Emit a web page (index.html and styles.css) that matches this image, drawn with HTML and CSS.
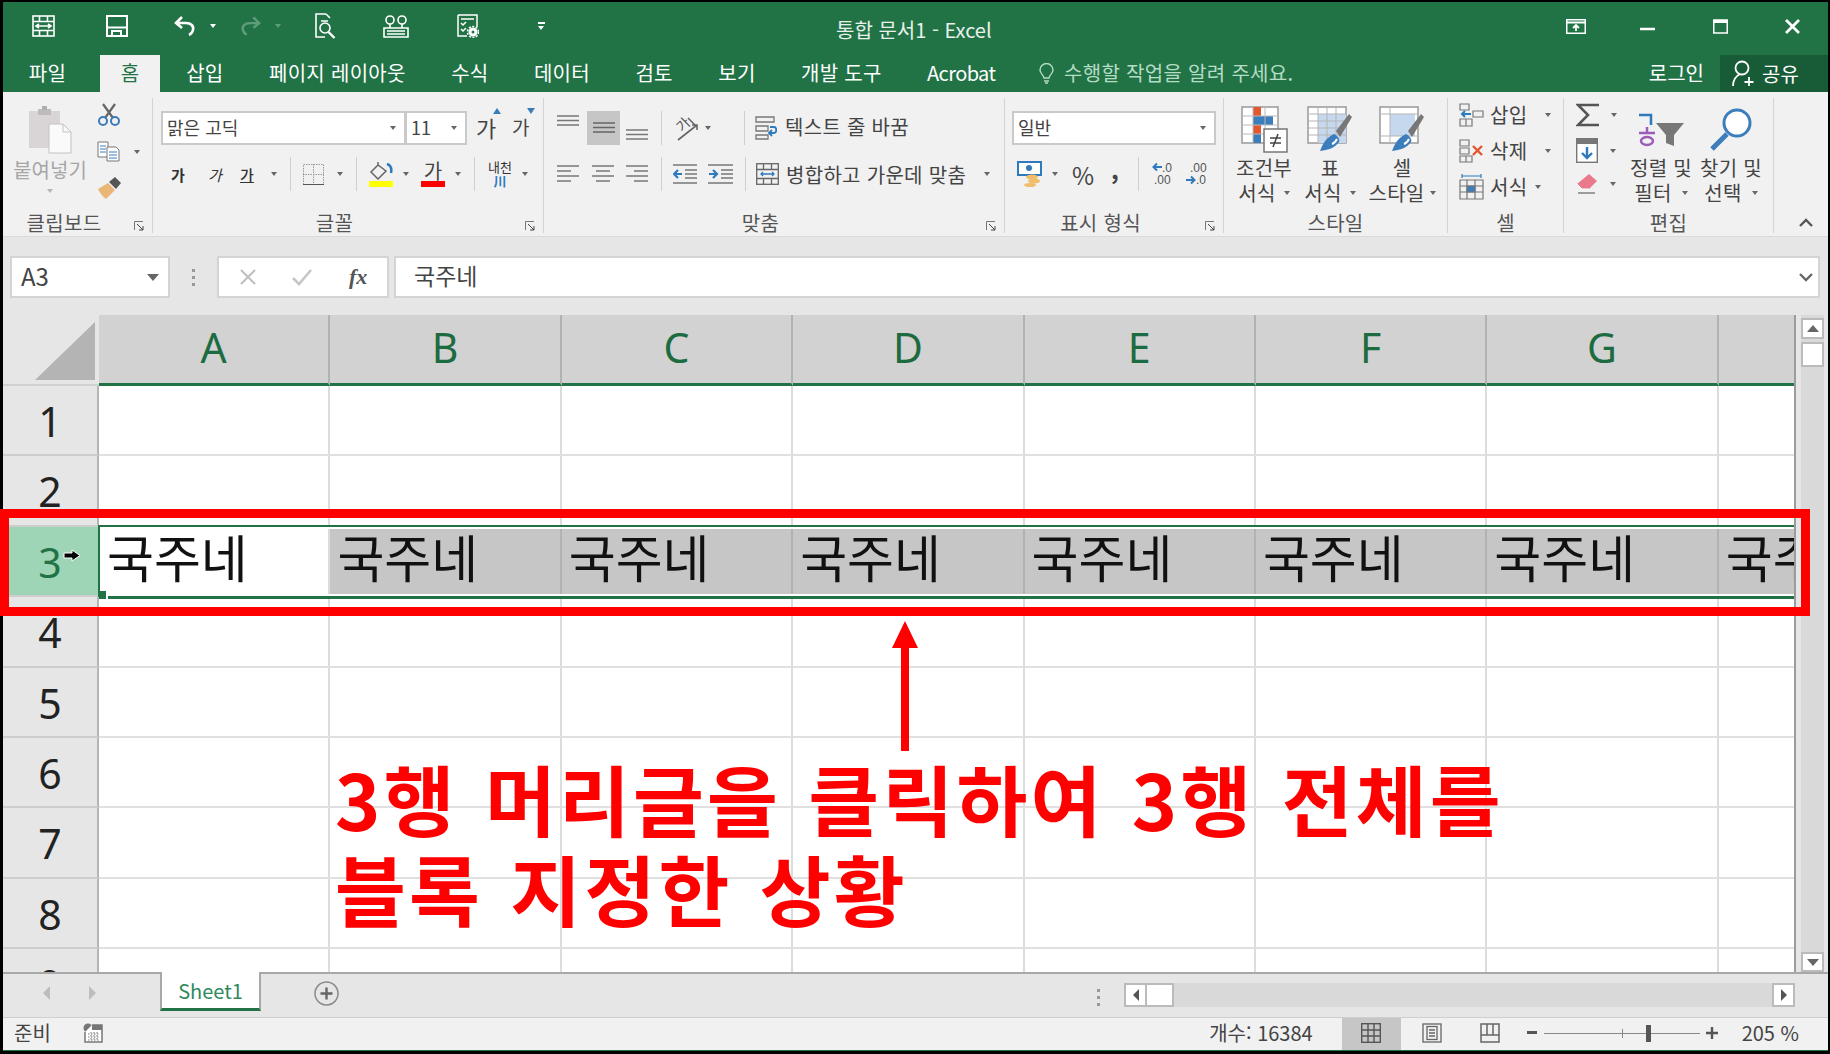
FILE: index.html
```html
<!DOCTYPE html>
<html lang="ko">
<head>
  <meta charset="UTF-8">
  <title>통합 문서1 - Excel</title>
  <link rel="stylesheet" href="styles.css">
</head>
<body>
  <header class="titlebar">
    <svg class="ml-29" width="23" height="22" viewBox="0 0 23 22" fill="none" stroke="#fff" stroke-width="1.6"><rect x="1" y="1" width="21" height="20"/><path d="M1 6.5h21M1 15.5h21M7.5 1v5.500M15.500 1v5.500M7.500 15.500V21M15.500 15.500V21M4 11h15M7 9l-3 2 3 2M16 9l3 2-3 2"/></svg>
    <svg class="ml-51" width="22" height="22" viewBox="0 0 22 22" fill="none" stroke="#fff" stroke-width="2"><path d="M1 1h20v20H1zM1 12.500h20M6 21v-5h9v5"/></svg>
    <svg class="ml-45" width="23" height="22" viewBox="0 0 23 22" fill="none" stroke="#fff" stroke-width="2.600"><path d="M9 2 3 8l6 5M3 8h10c5 0 8 3 7 7-.5 2-2 4-4 5"/></svg>
    <i class="caret caret-w ml-14"></i>
    <svg class="ml-24" width="22" height="22" viewBox="0 0 23 22" fill="none" stroke="#5f9c7c" stroke-width="2.600"><path d="M14 2l6 6-6 5M20 8H10c-5 0-8 3-7 7 .5 2 2 4 4 5"/></svg>
    <i class="caret caret-dim ml-13"></i>
    <svg class="ml-33" width="23" height="26" viewBox="0 0 23 26" fill="none" stroke="#fff" stroke-width="1.600"><path d="M12 1H2v23h9M12 1l4 4M7 8h7"/><circle cx="11" cy="15" r="5"/><path d="M14.500 19l6 6" stroke-width="2.400"/></svg>
    <svg class="ml-46" width="26" height="24" viewBox="0 0 26 24" fill="none" stroke="#fff" stroke-width="1.600"><circle cx="7" cy="6" r="4"/><circle cx="19" cy="6" r="4"/><path d="M7 10v4M19 10v4M1 14h24v9H1zM4 17h18M4 20h18"/></svg>
    <svg class="ml-48" width="22" height="24" viewBox="0 0 22 24" fill="none" stroke="#fff" stroke-width="1.500"><path d="M1 1h19v12M1 1v21h9M4 5h13M4 9l2 2 3-3M4 15l2 2 3-3"/><circle cx="16" cy="18" r="3" stroke-width="3"/><circle cx="16" cy="18" r="5.500" stroke-width="1.500" stroke-dasharray="2 1.500"/></svg>
    <span class="qat-more ml-59"><i class="qat-bar"></i><i class="caret caret-w"></i></span>
    <span class="doc-title">통합 문서1 - Excel</span>
    <span class="win-btns">
      <svg width="20" height="15" viewBox="0 0 20 15" fill="none" stroke="#fff" stroke-width="1.500"><rect x=".75" y=".75" width="18.500" height="13.500"/><path d="M1 3.500h18" stroke-width="2"/><path d="M10 12V6.500M7 9l3-3 3 3" stroke-width="1.800"/></svg>
      <svg class="ml-54" width="15" height="15" viewBox="0 0 15 15"><path d="M0 10h15" stroke="#fff" stroke-width="2.500"/></svg>
      <svg class="ml-58" width="15" height="15" viewBox="0 0 15 15" fill="none" stroke="#fff"><rect x=".75" y="1" width="13.500" height="13" stroke-width="1.500"/><path d="M1 2.500h13" stroke-width="3"/></svg>
      <svg class="ml-57" width="15" height="15" viewBox="0 0 15 15" stroke="#fff" stroke-width="2.800"><path d="M1 1l13 13M14 1 1 14"/></svg>
    </span>
  </header>

  <nav class="tabs">
    <a class="tab">파일</a>
    <a class="tab tab-active">홈</a>
    <a class="tab">삽입</a>
    <a class="tab">페이지 레이아웃</a>
    <a class="tab">수식</a>
    <a class="tab">데이터</a>
    <a class="tab">검토</a>
    <a class="tab">보기</a>
    <a class="tab">개발 도구</a>
    <a class="tab tab-latin">Acrobat</a>
    <svg class="bulb" width="15" height="21" viewBox="0 0 15 21" fill="none" stroke="#b5dcc5" stroke-width="1.400"><path d="M5 15c0-3-4-4-4-8a6.500 6.500 0 0 1 13 0c0 4-4 5-4 8zM5 18h5M6 20h3"/></svg>
    <span class="tell-me">수행할 작업을 알려 주세요.</span>
    <a class="login">로그인</a>
    <span class="share">
      <svg width="23" height="27" viewBox="0 0 23 27" fill="none" stroke="#fff" stroke-width="1.800"><circle cx="10" cy="8" r="6.500"/><path d="M1 26c0-6 3-10 7-12M17 17v9M12.500 22h9"/></svg>
      <span>공유</span>
    </span>
  </nav>

  <section class="ribbon">
    <div class="group group-clip">
      <div class="group-body clip-body">
        <div class="paste">
          <svg width="44" height="48" viewBox="0 0 44 48"><path d="M1 5h31v37H1z" fill="#d9d5d7"/><path d="M10 3h13v6H10z" fill="#bdbbbc"/><path d="M14 0h5v4h-5z" fill="#b0aeaf"/><path d="M21 18h14l8 8v21H21z" fill="#fafafa" stroke="#c2c2c2"/><path d="M35 18v8h8" fill="none" stroke="#c2c2c2"/></svg>
          <span class="paste-label">붙여넣기</span>
          <i class="caret caret-dim-gray"></i>
        </div>
        <div class="clip-tools">
          <svg width="24" height="23" viewBox="0 0 24 23" fill="none"><path d="M6 1l10 14M18 1 8 15" stroke="#666" stroke-width="2.200"/><circle cx="6" cy="18" r="4" stroke="#3a7cb8" stroke-width="2"/><circle cx="18" cy="18" r="4" stroke="#3a7cb8" stroke-width="2"/></svg>
          <span class="tool-row">
            <svg width="24" height="21" viewBox="0 0 24 21" fill="none" stroke="#777"><path d="M1 1h10v15H1z" fill="#fff"/><path d="M3 5h6M3 8h6M3 11h6" stroke="#3a7cb8"/><path d="M10 6h9l3 3v11H10z" fill="#fff"/><path d="M12 11h8M12 14h8M12 17h8" stroke="#3a7cb8"/></svg>
            <i class="caret ml-13"></i>
          </span>
          <svg width="25" height="22" viewBox="0 0 25 22"><path d="M1 12 11 6l7 7-9 9c-3-2-6-6-8-10z" fill="#eab676"/><path d="M12 5l6-5 6 6-5 6z" fill="#555"/></svg>
        </div>
      </div>
      <div class="group-label label-pad">클립보드</div>
      <svg class="launcher" width="10" height="10" viewBox="0 0 10 10" fill="none" stroke="#777"><path d="M.5 9V.5H9"/><path d="M3 3l6 6M9 5v4H5" stroke="#444"/></svg>
    </div>

    <div class="group group-font">
      <div class="group-body pad-8">
        <div class="row1">
          <span class="combo combo-font"><span class="combo-text">맑은 고딕</span><i class="caret"></i></span>
          <span class="combo combo-size"><span class="combo-text">11</span><i class="caret"></i></span>
          <span class="grow ml-9">가<svg class="tri" width="8" height="6" viewBox="0 0 8 6"><path d="M4 0l4 6H0z" fill="#3a7cb8"/></svg></span>
          <span class="grow grow-sm ml-15">가<svg class="tri" width="8" height="6" viewBox="0 0 8 6"><path d="M0 0h8L4 6z" fill="#3a7cb8"/></svg></span>
        </div>
        <div class="row2">
          <span class="fmt fmt-b ml-9">가</span>
          <span class="fmt fmt-i ml-21">가</span>
          <span class="fmt fmt-u ml-16">가</span>
          <i class="caret ml-16"></i>
          <i class="sep ml-13"></i>
          <svg class="ml-12" width="21" height="21" viewBox="0 0 21 21" fill="none" stroke="#999" stroke-dasharray="1.500 1"><rect x=".5" y=".5" width="20" height="20"/><path d="M10.500 0v21M0 10.500h21"/><path d="M0 20.500h21" stroke="#555" stroke-dasharray="none"/></svg>
          <i class="caret ml-13"></i>
          <i class="sep ml-13"></i>
          <span class="swatch-icon ml-12">
            <svg width="24" height="18" viewBox="0 0 24 18" fill="none"><path d="M9 3 2 10l7 7 8-8zM9 3V0" stroke="#666" stroke-width="1.500"/><path d="M18 2c3 1 5 4 4 9" stroke="#2f79bd" stroke-width="2.500"/></svg>
            <i class="swatch swatch-yellow"></i>
          </span>
          <i class="caret ml-10"></i>
          <span class="swatch-icon ml-12">
            <span class="fc-text">가</span>
            <i class="swatch swatch-red"></i>
          </span>
          <i class="caret ml-10"></i>
          <i class="sep ml-13"></i>
          <span class="phonetic ml-13"><span>내천</span><b>川</b></span>
          <i class="caret ml-10"></i>
        </div>
      </div>
      <div class="group-label label-pad">글꼴</div>
      <svg class="launcher" width="10" height="10" viewBox="0 0 10 10" fill="none" stroke="#777"><path d="M.5 9V.5H9"/><path d="M3 3l6 6M9 5v4H5" stroke="#444"/></svg>
    </div>

    <div class="group group-align">
      <div class="group-body pad-13">
        <div class="row1">
          <svg width="22" height="12" class="up" viewBox="0 0 22 12" stroke="#777" stroke-width="1.600"><path d="M0 1h22M0 5.500h22M0 10h22"/></svg>
          <span class="active-btn ml-8"><svg width="22" height="12" viewBox="0 0 22 12" stroke="#666" stroke-width="1.600"><path d="M0 1h22M0 5.500h22M0 10h22"/></svg></span>
          <svg width="22" height="12" class="down ml-6" viewBox="0 0 22 12" stroke="#777" stroke-width="1.600"><path d="M0 1h22M0 5.500h22M0 10h22"/></svg>
          <i class="sep ml-13"></i>
          <span class="orient ml-11">
            <span class="orient-text">가</span>
            <svg width="26" height="26" viewBox="0 0 26 26" fill="none" stroke="#666" stroke-width="1.600"><path d="M15 3l8 8M5 25 24 10M19 10l5 0 0 5"/></svg>
          </span>
          <i class="caret ml-6"></i>
          <i class="sep ml-33"></i>
          <svg class="ml-10" width="22" height="24" viewBox="0 0 22 24" fill="none" stroke="#777" stroke-width="1.300"><path d="M1 1h18v5H1zM1 10h12v5H1zM1 19h12v4H1z"/><path d="M15 17h4c3 0 3-6 0-6h-4" stroke="#2f79bd" stroke-width="1.800"/><path d="M17 14l-3 3 3 3" stroke="#2f79bd" stroke-width="1.800"/></svg>
          <span class="rtext rtext-up ml-8">텍스트 줄 바꿈</span>
        </div>
        <div class="row2">
          <svg width="22" height="18" viewBox="0 0 22 18" stroke="#777" stroke-width="1.500"><path d="M0 1h22M0 6h14M0 11h22M0 16h14"/></svg>
          <svg class="ml-13" width="22" height="18" viewBox="0 0 22 18" stroke="#777" stroke-width="1.500"><path d="M0 1h22M4 6h14M0 11h22M4 16h14"/></svg>
          <svg class="ml-12" width="22" height="18" viewBox="0 0 22 18" stroke="#777" stroke-width="1.500"><path d="M0 1h22M8 6h14M0 11h22M8 16h14"/></svg>
          <i class="sep ml-13"></i>
          <svg class="ml-11" width="24" height="20" viewBox="0 0 24 20" fill="none" stroke="#777" stroke-width="1.400"><path d="M0 1h24M12 6h12M12 10h12M12 14h12M0 19h24"/><path d="M9 10H1M5 6l-4 4 4 4" stroke="#2f79bd" stroke-width="2.200"/></svg>
          <svg class="ml-11" width="25" height="20" viewBox="0 0 25 20" fill="none" stroke="#777" stroke-width="1.400"><path d="M0 1h25M13 6h12M13 10h12M13 14h12M0 19h25"/><path d="M1 10h8M5 6l4 4-4 4" stroke="#2f79bd" stroke-width="2.200"/></svg>
          <i class="sep ml-12"></i>
          <svg class="ml-10" width="23" height="22" viewBox="0 0 23 22" fill="none" stroke="#666" stroke-width="1.300"><rect x=".7" y=".7" width="21.600" height="20.600"/><path d="M1 6.500h21M1 15.500h21M7.500 1v5.500M15.500 1v5.500M7.500 15.500V21M15.500 15.500V21"/><path d="M5 11h13M7 9l-2 2 2 2M16 9l2 2-2 2" stroke="#2f79bd"/></svg>
          <span class="rtext ml-7">병합하고 가운데 맞춤</span>
          <i class="caret ml-18"></i>
        </div>
      </div>
      <div class="group-label label-pad">맞춤</div>
      <svg class="launcher" width="10" height="10" viewBox="0 0 10 10" fill="none" stroke="#777"><path d="M.5 9V.5H9"/><path d="M3 3l6 6M9 5v4H5" stroke="#444"/></svg>
    </div>

    <div class="group group-number">
      <div class="group-body pad-7">
        <div class="row1">
          <span class="combo combo-num"><span class="combo-text">일반</span><i class="caret"></i></span>
        </div>
        <div class="row2">
          <svg class="ml-5" width="25" height="26" viewBox="0 0 25 26"><rect x="1" y="1" width="23" height="13" fill="#fff" stroke="#2f79bd" stroke-width="2"/><circle cx="12" cy="7" r="3" fill="#2f79bd"/><ellipse cx="15" cy="16" rx="6" ry="2.500" fill="#f0bd6a"/><ellipse cx="17" cy="20" rx="6" ry="2.500" fill="#f0bd6a"/><ellipse cx="13" cy="24" rx="6" ry="2" fill="#f0bd6a"/></svg>
          <i class="caret ml-10"></i>
          <span class="percent ml-14">%</span>
          <span class="comma ml-19">,</span>
          <i class="sep ml-20"></i>
          <span class="decimal ml-13">
            <svg width="20" height="24" viewBox="0 0 20 24"><path d="M10 5H2M5 1.500 1.500 5 5 8.500" fill="none" stroke="#2f79bd" stroke-width="2"/><text x="10" y="10" class="dec-num">.0</text><text x="2" y="22" class="dec-num">.00</text></svg>
          </span>
          <span class="decimal ml-13">
            <svg width="22" height="24" viewBox="0 0 22 24"><text x="5" y="10" class="dec-num">.00</text><path d="M1 18h8M6 14.500 9.500 18 6 21.500" fill="none" stroke="#2f79bd" stroke-width="2"/><text x="11" y="22" class="dec-num">.0</text></svg>
          </span>
        </div>
      </div>
      <div class="group-label label-pad">표시 형식</div>
      <svg class="launcher" width="10" height="10" viewBox="0 0 10 10" fill="none" stroke="#777"><path d="M.5 9V.5H9"/><path d="M3 3l6 6M9 5v4H5" stroke="#444"/></svg>
    </div>

    <div class="group group-style">
      <div class="group-body style-body">
        <div class="big-btn style-a">
          <span class="big-icon">
            <svg width="47" height="47" viewBox="0 0 47 47"><path d="M1 1h36v36H1z" fill="#fff" stroke="#999" stroke-width="1.500"/><path d="M12 1h8v9h-8zM12 19h8v9h-8z" fill="#e2582e"/><path d="M12 10h20v9H12zM12 28h8v9h-8z" fill="#3c7dbb"/><path d="M1 10h36M1 19h36M1 28h36M12 1v36M24 1v36" stroke="#bbb" fill="none"/><rect x="23" y="23" width="23" height="23" fill="#fff" stroke="#777" stroke-width="1.500"/><path d="M29 32h11M29 37h11M37 28l-5 13" stroke="#444" stroke-width="1.500"/></svg>
          </span>
          <span class="big-label">조건부</span>
          <span class="big-label">서식<i class="caret ml-8"></i></span>
        </div>
        <div class="big-btn style-b">
          <span class="big-icon">
            <svg width="46" height="47" viewBox="0 0 46 47"><path d="M1 1h38v36H1z" fill="#fff" stroke="#999" stroke-width="1.500"/><path d="M11 8h28v29H11z" fill="#c5d8ee"/><path d="M1 8h38M1 15h38M1 22h38M1 29h38M11 1v36M20 1v36M29 1v36" stroke="#b5b5b5" fill="none"/><path d="M29 25 42 8l3 3-12 20z" fill="#777"/><path d="M13 45c3-8 6-13 14-17 5 3 6 6 5 8-4 6-11 8-19 9z" fill="#3c7dbb"/><path d="M25 38c3-1 4-3 5-5" stroke="#fff" stroke-width="2" fill="none"/></svg>
          </span>
          <span class="big-label">표</span>
          <span class="big-label">서식<i class="caret ml-8"></i></span>
        </div>
        <div class="big-btn style-c">
          <span class="big-icon">
            <svg width="46" height="47" viewBox="0 0 46 47"><path d="M1 1h38v36H1z" fill="#fff" stroke="#999" stroke-width="1.500"/><path d="M11 8h25v22H11z" fill="#c5d8ee"/><path d="M1 8h38M11 1v36M1 30h38" stroke="#b5b5b5" fill="none"/><path d="M29 25 42 8l3 3-12 20z" fill="#777"/><path d="M13 45c3-8 6-13 14-17 5 3 6 6 5 8-4 6-11 8-19 9z" fill="#3c7dbb"/><path d="M25 38c3-1 4-3 5-5" stroke="#fff" stroke-width="2" fill="none"/></svg>
          </span>
          <span class="big-label">셀</span>
          <span class="big-label">스타일<i class="caret ml-5"></i></span>
        </div>
      </div>
      <div class="group-label">스타일</div>
    </div>

    <div class="group group-cells">
      <div class="group-body cells-body">
        <div class="cell-row">
          <svg width="25" height="24" viewBox="0 0 25 24" fill="none" stroke="#777" stroke-width="1.200"><path d="M1 1h9v6H1zM14 8h10v6H14zM1 16h6v7H1zM7 16h6v7H7z"/><path d="M12 11H3M6 8l-3 3 3 3" stroke="#2f79bd" stroke-width="2"/></svg>
          <span class="rtext ml-6">삽입</span><i class="caret ml-18"></i>
        </div>
        <div class="cell-row">
          <svg width="25" height="24" viewBox="0 0 25 24" fill="none" stroke="#777" stroke-width="1.200"><path d="M1 1h9v6H1zM1 9h9v6H1zM1 17h6v6H1zM7 17h6v6H7z"/><path d="M14 7l9 9M23 7l-9 9" stroke="#e2582e" stroke-width="2.400"/></svg>
          <span class="rtext ml-6">삭제</span><i class="caret ml-18"></i>
        </div>
        <div class="cell-row">
          <svg width="25" height="26" viewBox="0 0 25 26" fill="none" stroke="#777" stroke-width="1.200"><path d="M1 6h23v19H1zM1 12h23M1 18h23M8 6v19M16 6v19"/><path d="M8 12h8v6H8z" fill="#3c7dbb"/><path d="M3 2h19M3 0v4M22 0v4" stroke="#2f79bd"/></svg>
          <span class="rtext ml-6">서식</span><i class="caret ml-8"></i>
        </div>
      </div>
      <div class="group-label">셀</div>
    </div>

    <div class="group group-edit">
      <div class="group-body edit-body">
        <div class="edit-tools">
          <span class="tool-row">
            <svg width="24" height="24" viewBox="0 0 24 24" fill="none" stroke="#555" stroke-width="2.600"><path d="M23 2H2l10 10L2 22h21"/></svg>
            <i class="caret ml-11"></i>
          </span>
          <span class="tool-row">
            <svg width="22" height="25" viewBox="0 0 22 25"><rect x=".7" y=".7" width="20.600" height="23.600" fill="#fff" stroke="#777" stroke-width="1.400"/><path d="M1 1h20v5H1z" fill="#777"/><path d="M11 9v11M6 15l5 5 5-5" fill="none" stroke="#2f79bd" stroke-width="2.400"/></svg>
            <i class="caret ml-12"></i>
          </span>
          <span class="tool-row">
            <svg width="22" height="20" viewBox="0 0 22 20"><path d="M13 0l8 7-8 8H6L1 10z" fill="#e9798b"/><path d="M1 10l5 5h7" fill="none" stroke="#fff"/><path d="M2 19h17" stroke="#777" stroke-width="1.400"/></svg>
            <i class="caret ml-12"></i>
          </span>
        </div>
        <div class="big-btn edit-sort">
          <span class="big-icon">
            <svg width="46" height="34" viewBox="0 0 46 34" fill="none"><path d="M1 2h12v10" stroke="#2f79bd" stroke-width="2.500"/><path d="M1 20h16" stroke="#9c5cb8" stroke-width="2.500"/><path d="M9 14v6" stroke="#9c5cb8" stroke-width="2.500"/><ellipse cx="9" cy="28" rx="6" ry="4" stroke="#9c5cb8" stroke-width="2.500"/><path d="M18 10h28L36 22v11l-8-3v-8z" fill="#777"/></svg>
          </span>
          <span class="big-label">정렬 및</span>
          <span class="big-label">필터<i class="caret ml-10"></i></span>
        </div>
        <div class="big-btn edit-find">
          <span class="big-icon">
            <svg width="44" height="44" viewBox="0 0 44 44" fill="none"><circle cx="28" cy="15" r="13" fill="#fff" stroke="#3c7dbb" stroke-width="3"/><path d="M18 26 3 41" stroke="#3c7dbb" stroke-width="5"/></svg>
          </span>
          <span class="big-label">찾기 및</span>
          <span class="big-label">선택<i class="caret ml-10"></i></span>
        </div>
      </div>
      <div class="group-label">편집</div>
    </div>

    <div class="collapse">
      <svg width="14" height="9" viewBox="0 0 14 9" fill="none" stroke="#555" stroke-width="2.400"><path d="M1 8l6-6 6 6"/></svg>
    </div>
  </section>

  <div class="formula-bar">
    <span class="name-box"><span class="box-text">A3</span><i class="caret caret-big"></i></span>
    <span class="dots"></span>
    <span class="fx-box">
      <svg width="16" height="16" viewBox="0 0 16 16" stroke="#bfbfbf" stroke-width="2"><path d="M1 1l14 14M15 1 1 15"/></svg>
      <svg class="ml-36" width="20" height="17" viewBox="0 0 20 17" fill="none" stroke="#c6c6c6" stroke-width="2.600"><path d="M1 9l6 6L19 1"/></svg>
      <span class="fx">fx</span>
    </span>
    <span class="formula-input"><span class="box-text">국주네</span>
      <svg width="14" height="9" viewBox="0 0 14 9" fill="none" stroke="#666" stroke-width="2.400"><path d="M1 1l6 6 6-6"/></svg>
    </span>
  </div>

  <div class="sheet-wrap">
    <div class="sheet">
      <div class="col-heads">
        <div class="corner"><svg width="60" height="58" viewBox="0 0 60 58"><path d="M60 0v58H0z" fill="#b4b4b4"/></svg></div>
        <div class="col-head">A</div>
        <div class="col-head">B</div>
        <div class="col-head">C</div>
        <div class="col-head">D</div>
        <div class="col-head">E</div>
        <div class="col-head">F</div>
        <div class="col-head">G</div>
        <div class="col-head col-last"></div>
      </div>
      <div class="row">
        <div class="row-head">1</div>
        <div class="cell"></div><div class="cell"></div><div class="cell"></div><div class="cell"></div><div class="cell"></div><div class="cell"></div><div class="cell"></div><div class="cell col-last"></div>
      </div>
      <div class="row">
        <div class="row-head">2</div>
        <div class="cell"></div><div class="cell"></div><div class="cell"></div><div class="cell"></div><div class="cell"></div><div class="cell"></div><div class="cell"></div><div class="cell col-last"></div>
      </div>
      <div class="row row-selected">
        <div class="row-head row-head-on">3
          <svg class="row-cursor" width="18" height="13" viewBox="0 0 18 13"><path d="M1 4h8V1l8 5.500-8 5.500V9H1z" fill="#000" stroke="#fff"/></svg>
        </div>
        <div class="selection">
          <div class="cell cell-active">국주네</div>
          <div class="cell cell-on">국주네</div>
          <div class="cell cell-on">국주네</div>
          <div class="cell cell-on">국주네</div>
          <div class="cell cell-on">국주네</div>
          <div class="cell cell-on">국주네</div>
          <div class="cell cell-on">국주네</div>
          <div class="cell cell-on col-last">국주네</div>
          <i class="fill-handle"></i>
        </div>
      </div>
      <div class="row">
        <div class="row-head">4</div>
        <div class="cell"></div><div class="cell"></div><div class="cell"></div><div class="cell"></div><div class="cell"></div><div class="cell"></div><div class="cell"></div><div class="cell col-last"></div>
      </div>
      <div class="row">
        <div class="row-head">5</div>
        <div class="cell"></div><div class="cell"></div><div class="cell"></div><div class="cell"></div><div class="cell"></div><div class="cell"></div><div class="cell"></div><div class="cell col-last"></div>
      </div>
      <div class="row">
        <div class="row-head">6</div>
        <div class="cell"></div><div class="cell"></div><div class="cell"></div><div class="cell"></div><div class="cell"></div><div class="cell"></div><div class="cell"></div><div class="cell col-last"></div>
      </div>
      <div class="row">
        <div class="row-head">7</div>
        <div class="cell"></div><div class="cell"></div><div class="cell"></div><div class="cell"></div><div class="cell"></div><div class="cell"></div><div class="cell"></div><div class="cell col-last"></div>
      </div>
      <div class="row">
        <div class="row-head">8</div>
        <div class="cell"></div><div class="cell"></div><div class="cell"></div><div class="cell"></div><div class="cell"></div><div class="cell"></div><div class="cell"></div><div class="cell col-last"></div>
      </div>
      <div class="row">
        <div class="row-head">9</div>
        <div class="cell"></div><div class="cell"></div><div class="cell"></div><div class="cell"></div><div class="cell"></div><div class="cell"></div><div class="cell"></div><div class="cell col-last"></div>
      </div>
    </div>
    <div class="vscroll">
      <span class="sb-btn sb-up"><i class="tri-up"></i></span>
      <span class="sb-thumb"></span>
      <span class="sb-btn sb-down"><i class="tri-down"></i></span>
    </div>
  </div>

  <div class="sheet-bar">
    <i class="nav-l ml-40"></i>
    <i class="nav-r ml-39"></i>
    <div class="sheet-tab">Sheet1</div>
    <svg class="add-sheet" width="25" height="25" viewBox="0 0 25 25" fill="none" stroke="#666"><circle cx="12.500" cy="12.500" r="11.500" stroke="#8a8a8a" stroke-width="1.500"/><path d="M12.500 6.500v12M6.500 12.500h12" stroke-width="2.400"/></svg>
    <span class="dots dots-bar"></span>
    <div class="hscroll">
      <span class="hs-btn"><i class="tri-left"></i></span>
      <span class="hs-thumb"></span>
      <span class="hs-track"></span>
      <span class="hs-btn"><i class="tri-right"></i></span>
    </div>
  </div>

  <footer class="status">
    <span class="status-text ml-11">준비</span>
    <svg class="ml-32" width="20" height="20" viewBox="0 0 20 20"><circle cx="5" cy="5" r="4.500" fill="#777"/><path d="M9 2h10v17H2V9" fill="#fff" stroke="#777" stroke-width="1.500"/><path d="M9 2h10v5H9z" fill="#777"/><path d="M5 11h12M5 14h12M5 17h12M8 9v9M11 9v9M14 9v9" stroke="#777" stroke-dasharray="1.500 1.500"/></svg>
    <span class="status-text count">개수: 16384</span>
    <span class="view-btn ml-29">
      <svg width="20" height="20" viewBox="0 0 20 20" fill="none" stroke="#555" stroke-width="1.400"><rect x=".7" y=".7" width="18.600" height="18.600"/><path d="M7 1v18M13 1v18M1 7h18M1 13h18"/></svg>
    </span>
    <svg class="ml-21" width="20" height="20" viewBox="0 0 20 20" fill="none" stroke="#666" stroke-width="1.300"><rect x="1" y="1" width="18" height="18"/><rect x="5" y="3.500" width="10" height="13"/><path d="M7 7h6M7 10h6M7 13h6"/></svg>
    <svg class="ml-38" width="20" height="20" viewBox="0 0 20 20" fill="none" stroke="#666" stroke-width="1.500"><path d="M1 1h18v18H1zM1 12h18M7 1v11M13 1v11"/></svg>
    <svg class="ml-27" width="10" height="4" viewBox="0 0 10 4"><path d="M0 0h10v3H0z" fill="#555"/></svg>
    <span class="zoom-track ml-7"><i class="zoom-mid"></i><i class="zoom-thumb"></i></span>
    <svg class="ml-6" width="12" height="12" viewBox="0 0 12 12" stroke="#555" stroke-width="2.400"><path d="M6 0v12M0 6h12"/></svg>
    <span class="status-text zoom-pct">205 %</span>
  </footer>

  <div class="row-mark"></div>
  <svg class="up-arrow" width="28" height="130" viewBox="0 0 28 130"><path d="M14 0l13 27H18v103H10V27H1z" fill="#f00"/></svg>
  <p class="note">3행 머리글을 클릭하여 3행 전체를<br>블록 지정한 상황</p>
</body>
</html>
```

FILE: styles.css
```css
* {
  box-sizing: border-box;
}

body {
  position: relative;
  width: 1830px;
  height: 1054px;
  margin: 0;
  padding: 2px 2px 3px 3px;
  overflow: hidden;
  background-color: #000;
  font-family: "Noto Sans CJK KR", "Noto Sans", sans-serif;
  font-size: 20px;
  color: #444;
}

i {
  display: block;
  flex: none;
}

svg {
  display: block;
  flex: none;
}

/* margin helpers for the toolbar rows */
.ml-5 { margin-left: 5px; }
.ml-6 { margin-left: 6px; }
.ml-7 { margin-left: 7px; }
.ml-8 { margin-left: 8px; }
.ml-9 { margin-left: 9px; }
.ml-10 { margin-left: 10px; }
.ml-11 { margin-left: 11px; }
.ml-12 { margin-left: 12px; }
.ml-13 { margin-left: 13px; }
.ml-14 { margin-left: 14px; }
.ml-15 { margin-left: 15px; }
.ml-16 { margin-left: 16px; }
.ml-18 { margin-left: 18px; }
.ml-19 { margin-left: 19px; }
.ml-20 { margin-left: 20px; }
.ml-21 { margin-left: 21px; }
.ml-24 { margin-left: 24px; }
.ml-27 { margin-left: 27px; }
.ml-29 { margin-left: 29px; }
.ml-32 { margin-left: 32px; }
.ml-33 { margin-left: 33px; }
.ml-36 { margin-left: 36px; }
.ml-38 { margin-left: 38px; }
.ml-39 { margin-left: 39px; }
.ml-40 { margin-left: 40px; }
.ml-45 { margin-left: 45px; }
.ml-46 { margin-left: 46px; }
.ml-48 { margin-left: 48px; }
.ml-51 { margin-left: 51px; }
.ml-54 { margin-left: 54px; }
.ml-57 { margin-left: 57px; }
.ml-58 { margin-left: 58px; }
.ml-59 { margin-left: 59px; }

.caret {
  width: 0;
  height: 0;
  border-top: 4px solid #666;
  border-left: 3.5px solid transparent;
  border-right: 3.5px solid transparent;
}

.caret-w { border-top-color: #fff; }
.caret-dim { border-top-color: #5f9c7c; }
.caret-dim-gray { border-top-color: #b5b5b5; }

/* title bar */
.titlebar {
  display: flex;
  align-items: center;
  height: 53px;
  padding-bottom: 5px;
  background-color: #217346;
}

.qat-more {
  display: flex;
  flex-direction: column;
  gap: 2px;
}

.qat-bar {
  width: 7px;
  height: 2px;
  background-color: #fff;
}

.doc-title {
  margin: 6px 0 0 291px;
  font-size: 20px;
  color: #e8f1ec;
}

.win-btns {
  display: flex;
  align-items: center;
  margin-left: auto;
  padding-right: 28px;
}

/* tab strip */
.tabs {
  display: flex;
  align-items: stretch;
  height: 37px;
  padding-left: 3px;
  background-color: #217346;
  line-height: 35px;
  color: #fff;
}

.tab {
  padding: 0 22.700px;
  letter-spacing: .3px;
}

.tab-active {
  margin: 0 3px 0 11px;
  padding: 0 21px;
  background-color: #f1f1f1;
  color: #217346;
}

.tab-latin {
  letter-spacing: -.6px;
}

.bulb {
  margin: 8px 10px 0 21px;
}

.tell-me {
  letter-spacing: .3px;
  color: #b5dcc5;
}

.login {
  margin-left: auto;
  margin-right: 16px;
}

.share {
  display: flex;
  align-items: center;
  gap: 7px;
  width: 108px;
  padding-left: 12px;
  background-color: #185c37;
}

/* ribbon */
.ribbon {
  display: flex;
  height: 145px;
  background-color: #f1f1f1;
  border-bottom: 1px solid #dadada;
}

.group {
  position: relative;
  flex: none;
  height: 135px;
  margin-top: 6px;
  border-right: 1px solid #d4d4d4;
}

.group-clip { width: 150px; }
.group-font { width: 391px; }
.group-align { width: 461px; }
.group-number { width: 219px; }
.group-style { width: 224px; }
.group-cells { width: 116px; }
.group-edit { width: 210px; }

.group-body {
  display: flow-root;
  height: 115px;
}

.pad-7 { padding-left: 7px; }
.pad-8 { padding-left: 8px; }
.pad-13 { padding-left: 13px; }

.group-label {
  height: 20px;
  line-height: 20px;
  text-align: center;
  letter-spacing: .3px;
  color: #555;
}

.label-pad {
  padding-right: 27px;
}

.launcher {
  position: absolute;
  right: 8px;
  bottom: 2px;
}

.clip-body {
  display: flex;
}

.paste {
  display: flex;
  flex-direction: column;
  align-items: center;
  width: 94px;
  padding-top: 8px;
}

.paste-label {
  margin-top: 4px;
  line-height: 24px;
  color: #a6a6a6;
}

.paste .caret {
  margin-top: 7px;
}

.clip-tools {
  display: flex;
  flex-direction: column;
  gap: 15px;
  padding-top: 5px;
}

.tool-row {
  display: flex;
  align-items: center;
}

.row1 {
  display: flex;
  align-items: center;
  height: 34px;
  margin-top: 13px;
}

.row2 {
  display: flex;
  align-items: center;
  height: 34px;
  margin-top: 12px;
}

.sep {
  width: 1px;
  height: 34px;
  background-color: #cfcfcf;
}

.combo {
  display: flex;
  align-items: center;
  justify-content: space-between;
  height: 34px;
  padding: 0 8px 0 4px;
  background-color: #fff;
  border: 2px solid #c9c9c9;
  font-size: 18px;
  flex: none;
}

.combo-text {
  margin-top: -3px;
}

.combo-font { width: 245px; }
.combo-size { width: 62px; margin-left: -1px; }
.combo-num { width: 204px; }

.grow {
  position: relative;
  width: 21px;
  margin-top: -2px;
  font-size: 22px;
  line-height: 30px;
}

.grow-sm {
  width: 19px;
  font-size: 19px;
}

.tri {
  position: absolute;
  right: -4px;
  top: -4px;
}

.fmt {
  width: 16px;
  font-size: 15px;
  text-align: center;
  color: #333;
}

.fmt-b { font-weight: 700; }
.fmt-i { font-style: italic; }
.fmt-u { text-decoration: underline; font-weight: 500; }

.swatch-icon {
  display: flex;
  flex-direction: column;
  width: 24px;
}

.swatch {
  width: 24px;
  height: 6px;
  margin-top: 1px;
}

.swatch-yellow { background-color: #ff0; }
.swatch-red { background-color: #f00; }

.fc-text {
  height: 18px;
  font-size: 20px;
  line-height: 18px;
  text-align: center;
}

.phonetic {
  display: flex;
  flex-direction: column;
  align-items: center;
  width: 24px;
  font-size: 13px;
  line-height: 14px;
  color: #333;
}

.phonetic b {
  color: #2f79bd;
}

.active-btn {
  display: flex;
  align-items: center;
  justify-content: center;
  width: 33px;
  height: 34px;
  background-color: #c6c6c6;
}

.up { margin-bottom: 14px; }
.down { margin-top: 14px; }

.orient {
  position: relative;
  flex: none;
  width: 26px;
  height: 26px;
}

.orient-text {
  position: absolute;
  left: 3px;
  top: 1px;
  font-size: 14px;
  line-height: 16px;
  transform: rotate(-45deg);
  color: #555;
}

.rtext {
  letter-spacing: .3px;
  white-space: nowrap;
}

.rtext-up {
  margin-top: -4px;
}

.percent {
  width: 20px;
  font-size: 24px;
  text-align: center;
}

.comma {
  width: 7px;
  margin-bottom: 10px;
  font-size: 24px;
  font-weight: 700;
  line-height: 20px;
}

.dec-num {
  font-family: "Liberation Sans", sans-serif;
  font-size: 12px;
  fill: #555;
}

.style-body {
  display: flex;
  padding: 7px 0 0 7px;
}

.big-btn {
  display: flex;
  flex-direction: column;
  align-items: center;
  flex: none;
}

.style-a, .style-b { width: 66px; }
.style-c { width: 78px; }

.big-icon {
  display: flex;
  align-items: center;
  height: 47px;
  margin-bottom: 3px;
}

.big-label {
  display: flex;
  align-items: center;
  height: 25px;
  letter-spacing: .3px;
  white-space: nowrap;
}

.cells-body {
  display: flex;
  flex-direction: column;
  gap: 11px;
  padding: 4px 0 0 11px;
}

.cell-row {
  display: flex;
  align-items: center;
  height: 25px;
}

.edit-body {
  display: flex;
  padding: 5px 0 0 12px;
}

.edit-tools {
  display: flex;
  flex-direction: column;
  gap: 11px;
  width: 54px;
}

.edit-sort { width: 62px; padding-top: 2px; }
.edit-find { width: 62px; margin-left: 8px; padding-top: 2px; }

.big-icon svg {
  margin-top: 2px;
}

.collapse {
  display: flex;
  flex: 1;
  justify-content: flex-end;
  padding: 126px 15px 0 0;
}

/* formula bar */
.formula-bar {
  display: flex;
  height: 78px;
  padding: 19px 8px 0 7px;
  background-color: #e6e6e6;
}

.name-box,
.fx-box,
.formula-input {
  display: flex;
  align-items: center;
  height: 42px;
  background-color: #fff;
  border: 2px solid #d4d4d4;
}

.name-box {
  justify-content: space-between;
  width: 160px;
  padding: 0 9px 0 9px;
  font-size: 24px;
}

.box-text {
  margin-top: -4px;
}

.caret-big {
  border-top-width: 7px;
  border-left-width: 6px;
  border-right-width: 6px;
}

.dots {
  width: 3px;
  height: 19px;
  margin: 11px 22px 0 22px;
  background-image: radial-gradient(circle, #999 1.500px, transparent 1.600px);
  background-size: 3px 7px;
}

.fx-box {
  width: 172px;
  padding-left: 21px;
}

.fx {
  margin-left: 37px;
  font-family: "Liberation Serif", serif;
  font-style: italic;
  font-weight: 700;
  font-size: 22px;
  color: #555;
}

.formula-input {
  justify-content: space-between;
  flex: 1;
  margin-left: 5px;
  padding: 0 5px 0 18px;
  font-size: 23px;
}

/* grid */
.sheet-wrap {
  display: flex;
  height: 657px;
  background-color: #e6e6e6;
}

.sheet {
  width: 1793px;
  height: 657px;
  overflow: hidden;
  border-right: 2px solid #9c9c9c;
}

.col-heads {
  display: flex;
  height: 71px;
}

.corner {
  display: flex;
  justify-content: flex-end;
  flex: none;
  width: 96px;
  padding: 7px 4px 0 0;
  border-bottom: 2px solid #d0d0d0;
}

.col-head {
  flex: none;
  width: 231.400px;
  padding-bottom: 2px;
  background-color: #d2d2d2;
  border-right: 2px solid #b2b2b2;
  border-bottom: 3px solid #217346;
  font-family: "Noto Sans", sans-serif;
  font-size: 41px;
  line-height: 65px;
  text-align: center;
  color: #1d6b40;
}

.col-head.col-last,
.cell.col-last {
  width: 77px;
  border-right: none;
}

.row {
  display: flex;
  height: 70.400px;
}

.row-head {
  position: relative;
  flex: none;
  width: 96px;
  background-color: #e6e6e6;
  border-right: 2px solid #b5b5b5;
  border-bottom: 2px solid #cdcdcd;
  font-family: "Noto Sans", sans-serif;
  font-size: 41px;
  line-height: 71px;
  text-align: center;
  color: #222;
}

.cell {
  flex: none;
  width: 231.400px;
  padding-left: 7px;
  background-color: #fff;
  border-right: 2px solid #dcdcdc;
  border-bottom: 2px solid #e0e0e0;
  font-size: 51px;
  line-height: 55px;
  white-space: nowrap;
  color: #111;
}

.row-selected {
  position: relative;
}

.row-head-on {
  background-color: #9fd5b7;
  border-right-color: #9fd5b7;
  line-height: 70px;
  color: #217346;
}

.row-cursor {
  position: absolute;
  left: 60px;
  top: 22px;
}

.selection {
  position: relative;
  display: flex;
  flex: 1;
  margin: -2px 0 -2px -1px;
  padding: 2px 0;
  background-color: #fff;
  border-top: 2px solid #217346;
  border-bottom: 3px solid #217346;
  border-left: 2px solid #217346;
}

.selection .cell {
  border-bottom: none;
}

.cell-active {
  width: 230.400px;
}

.cell-on {
  background-color: #c6c6c6;
  border-right-color: #b2b2b2;
}

.fill-handle {
  position: absolute;
  left: -2px;
  bottom: -3px;
  width: 10px;
  height: 8px;
  background-color: #217346;
  border-right: 2px solid #fff;
}

/* vertical scrollbar */
.vscroll {
  display: flex;
  flex-direction: column;
  width: 23px;
  height: 657px;
  margin-left: 5px;
  padding-top: 3px;
  background-color: #d9d9d9;
}

.sb-btn,
.sb-thumb,
.hs-btn,
.hs-thumb {
  display: flex;
  align-items: center;
  justify-content: center;
  flex: none;
  background-color: #fff;
  border: 2px solid #bbb;
}

.sb-up { height: 21px; }
.sb-thumb { height: 25px; margin-top: 3px; }
.sb-down { height: 20px; margin-top: auto; }

.tri-up {
  border-bottom: 7px solid #666;
  border-left: 6px solid transparent;
  border-right: 6px solid transparent;
}

.tri-down {
  border-top: 7px solid #666;
  border-left: 6px solid transparent;
  border-right: 6px solid transparent;
}

/* sheet tabs and horizontal scrollbar */
.sheet-bar {
  display: flex;
  align-items: flex-start;
  height: 45px;
  background-color: #e6e6e6;
  border-top: 2px solid #a8a8a8;
}

.nav-l {
  margin-top: 12px;
  border-right: 7px solid #bdbdbd;
  border-top: 7px solid transparent;
  border-bottom: 7px solid transparent;
}

.nav-r {
  margin-top: 12px;
  border-left: 7px solid #bdbdbd;
  border-top: 7px solid transparent;
  border-bottom: 7px solid transparent;
}

.sheet-tab {
  flex: none;
  width: 101px;
  height: 39px;
  margin: -2px 0 0 64px;
  background-color: #fff;
  border-left: 2px solid #a8a8a8;
  border-right: 2px solid #a8a8a8;
  border-bottom: 3px solid #217346;
  line-height: 37px;
  text-align: center;
  color: #2f8a5c;
}

.add-sheet {
  margin: 7px 0 0 53px;
}

.dots-bar {
  margin: 13px 0 0 758px;
}

.hscroll {
  display: flex;
  flex: none;
  width: 671px;
  height: 24px;
  margin: 9px 0 0 24px;
  background-color: #d9d9d9;
}

.hs-btn { width: 23px; }
.hs-thumb { width: 27px; border-left: none; }
.hs-track { flex: 1; }

.tri-left {
  border-right: 6px solid #555;
  border-top: 6px solid transparent;
  border-bottom: 6px solid transparent;
}

.tri-right {
  border-left: 6px solid #555;
  border-top: 6px solid transparent;
  border-bottom: 6px solid transparent;
}

/* status bar */
.status {
  display: flex;
  align-items: center;
  height: 34px;
  padding-bottom: 2px;
  background-color: #f1f1f1;
  border-top: 1px solid #cfcfcf;
  border-bottom: 1px solid #217346;
  line-height: 28px;
}

.count {
  margin-left: auto;
  white-space: nowrap;
}

.view-btn {
  display: flex;
  align-items: center;
  justify-content: center;
  width: 59px;
  height: 32px;
  margin-bottom: -2px;
  padding-bottom: 2px;
  background-color: #c6c6c6;
}

.zoom-track {
  position: relative;
  width: 156px;
  height: 1px;
  background-color: #888;
}

.zoom-mid {
  position: absolute;
  left: 78px;
  top: -4px;
  width: 1px;
  height: 9px;
  background-color: #888;
}

.zoom-thumb {
  position: absolute;
  left: 102px;
  top: -8px;
  width: 5px;
  height: 17px;
  background-color: #555;
}

.zoom-pct {
  margin-left: 24px;
  padding-right: 29px;
}

/* red annotation on top of the sheet */
.row-mark {
  position: absolute;
  left: 0;
  top: 509px;
  width: 1810px;
  height: 107px;
  border: 9px solid #f00;
}

.up-arrow {
  position: absolute;
  left: 891px;
  top: 621px;
}

.note {
  position: absolute;
  left: 335px;
  top: 753px;
  margin: 0;
  font-size: 77px;
  font-weight: 700;
  letter-spacing: 3.200px;
  line-height: 90px;
  word-spacing: 2.500px;
  white-space: nowrap;
  color: #f00;
}
```
